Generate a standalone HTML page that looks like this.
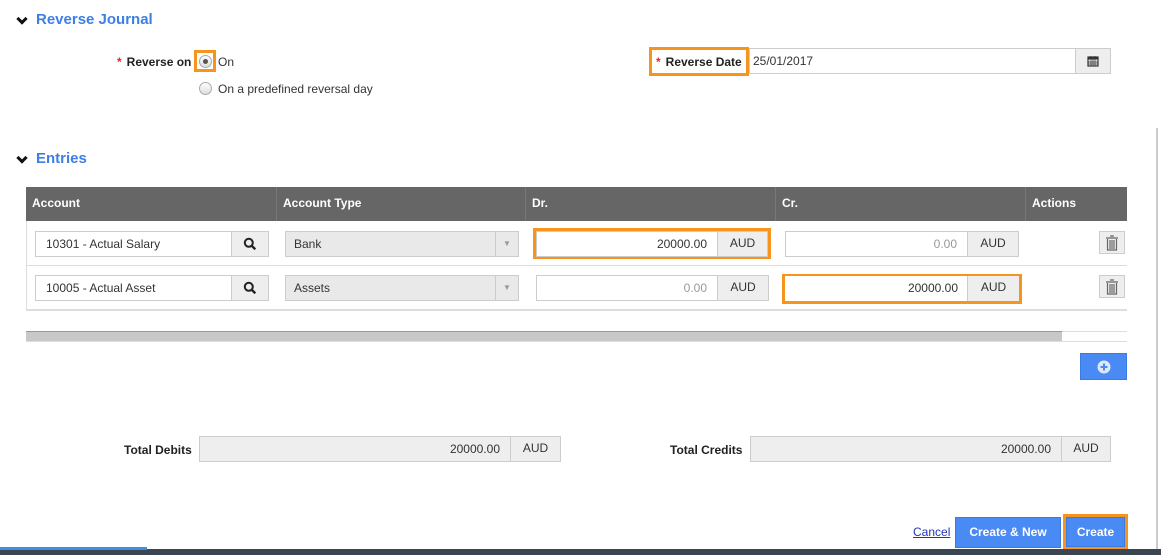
<!DOCTYPE html>
<html><head><style>
*{box-sizing:border-box;margin:0;padding:0}
body{width:1161px;height:555px;overflow:hidden;background:#fff;font-family:"Liberation Sans",Arial,sans-serif;font-size:12px;color:#333;position:relative}
.a{position:absolute}
.h{color:#3d7fe6;font-weight:bold;font-size:15px}
.chev{width:8px;height:8px;border-right:3px solid #111;border-bottom:3px solid #111;transform:rotate(45deg)}
.lbl{font-weight:bold;font-size:12px;color:#222}
.req{color:#e22;margin-right:5px}
.radio{width:13px;height:13px;border-radius:50%;border:1px solid #aaa;background:linear-gradient(#fff,#ddd)}
.inp{border:1px solid #ccc;background:#fff;height:26px;line-height:24px;padding:0 10px;font-size:12px}
.addon{border:1px solid #ccc;background:#eee;height:26px;line-height:22px;text-align:center;font-size:12px}
.sel{border:1px solid #ccc;background:#e9e9e9;height:26px;line-height:24px;padding:0 8px}
.or{border:3px solid #f7941d}
.th{background:#666;color:#fff;font-weight:bold;height:34px;line-height:33px;padding-left:6px;border-right:1px solid #777}
.btn{background:#4a8af4;color:#fff;font-weight:bold;text-align:center;border:1px solid #3b7ae0}
</style></head><body>

<div class="a chev" style="left:18px;top:15px"></div>
<div class="a h" style="left:36px;top:11px">Reverse Journal</div>
<div class="a lbl" style="left:117px;top:55px"><span class="req">*</span>Reverse on</div>
<div class="a or" style="left:194px;top:50px;width:22px;height:22px"></div>
<div class="a radio" style="left:199px;top:55px"><div style="width:5px;height:5px;border-radius:50%;background:#555;margin:3px"></div></div>
<div class="a" style="left:218px;top:55px">On</div>
<div class="a radio" style="left:199px;top:82px"></div>
<div class="a" style="left:218px;top:82px">On a predefined reversal day</div>

<div class="a or" style="left:649px;top:47px;width:100px;height:29px;background:#fff"></div>
<div class="a lbl" style="left:656px;top:55px"><span class="req">*</span>Reverse Date</div>
<div class="a inp" style="left:749px;top:48px;width:327px;padding-left:3px">25/01/2017</div>
<div class="a addon" style="left:1075px;top:48px;width:36px">
<svg width="12" height="12" viewBox="0 0 12 12" style="margin-top:6px"><rect x="1" y="2" width="10" height="9" fill="none" stroke="#333" stroke-width="1.2"/><rect x="1" y="2" width="10" height="2.5" fill="#333"/><path d="M4 1v2M8 1v2M1 7h10M1 9h10M4 4v7M6 4v7M8 4v7" stroke="#333" stroke-width=".7"/></svg></div>

<div class="a" style="left:1156px;top:128px;width:2px;height:422px;background:#ccc"></div>

<div class="a chev" style="left:18px;top:154px"></div>
<div class="a h" style="left:36px;top:150px">Entries</div>

<div class="a th" style="left:26px;top:187px;width:251px">Account</div>
<div class="a th" style="left:277px;top:187px;width:249px">Account Type</div>
<div class="a th" style="left:526px;top:187px;width:250px">Dr.</div>
<div class="a th" style="left:776px;top:187px;width:250px">Cr.</div>
<div class="a th" style="left:1026px;top:187px;width:101px;border:0">Actions</div>
<div class="a" style="left:26px;top:221px;width:1px;height:89px;background:#ddd"></div>
<div class="a" style="left:26px;top:265px;width:1101px;height:1px;background:#ddd"></div>
<div class="a" style="left:26px;top:309px;width:1101px;height:2px;background:#ddd"></div>

<!-- row1 -->
<div class="a inp" style="left:35px;top:231px;width:197px">10301 - Actual Salary</div>
<div class="a addon" style="left:231px;top:231px;width:38px"><svg width="14" height="14" viewBox="0 0 14 14" style="margin-top:5px"><circle cx="5.8" cy="5.8" r="4" fill="none" stroke="#222" stroke-width="2"/><path d="M8.8 8.8l3.5 3.5" stroke="#222" stroke-width="2.4"/></svg></div>
<div class="a sel" style="left:285px;top:231px;width:234px">Bank<span style="position:absolute;right:0;top:0;width:23px;height:24px;border-left:1px solid #ccc;text-align:center;color:#999;font-size:8px">▼</span></div>
<div class="a or" style="left:533px;top:228px;width:238px;height:31px"></div>
<div class="a inp" style="left:536px;top:231px;width:182px;text-align:right">20000.00</div>
<div class="a addon" style="left:717px;top:231px;width:51px">AUD</div>
<div class="a inp" style="left:785px;top:231px;width:183px;text-align:right;color:#999">0.00</div>
<div class="a addon" style="left:967px;top:231px;width:52px">AUD</div>
<div class="a addon" style="left:1099px;top:231px;width:26px;height:23px"><svg width="12" height="16" viewBox="0 0 12 16" style="margin-top:3px"><path d="M0 3h12M4 1h4M1.5 4v11h9V4M4 5v9M6 5v9M8 5v9" stroke="#666" fill="none" stroke-width="1.2"/></svg></div>

<!-- row2 -->
<div class="a inp" style="left:35px;top:275px;width:197px">10005 - Actual Asset</div>
<div class="a addon" style="left:231px;top:275px;width:38px"><svg width="14" height="14" viewBox="0 0 14 14" style="margin-top:5px"><circle cx="5.8" cy="5.8" r="4" fill="none" stroke="#222" stroke-width="2"/><path d="M8.8 8.8l3.5 3.5" stroke="#222" stroke-width="2.4"/></svg></div>
<div class="a sel" style="left:285px;top:275px;width:234px">Assets<span style="position:absolute;right:0;top:0;width:23px;height:24px;border-left:1px solid #ccc;text-align:center;color:#999;font-size:8px">▼</span></div>
<div class="a inp" style="left:536px;top:275px;width:182px;text-align:right;color:#999">0.00</div>
<div class="a addon" style="left:717px;top:275px;width:52px">AUD</div>
<div class="a or" style="left:782px;top:274px;width:240px;height:30px"></div>
<div class="a inp" style="left:785px;top:276px;width:183px;height:25px;text-align:right;border:0">20000.00</div>
<div class="a addon" style="left:967px;top:276px;width:52px;height:25px;border:0;border-left:1px solid #ccc">AUD</div>
<div class="a addon" style="left:1099px;top:275px;width:26px;height:23px"><svg width="12" height="16" viewBox="0 0 12 16" style="margin-top:3px"><path d="M0 3h12M4 1h4M1.5 4v11h9V4M4 5v9M6 5v9M8 5v9" stroke="#666" fill="none" stroke-width="1.2"/></svg></div>

<!-- scrollbar -->
<div class="a" style="left:26px;top:331px;width:1101px;height:11px;border-top:1px solid #ddd;border-bottom:1px solid #ddd"></div>
<div class="a" style="left:26px;top:331px;width:1036px;height:10px;background:#c8c8c8;border-top:1px solid #999"></div>

<div class="a btn" style="left:1080px;top:353px;width:47px;height:27px"><svg width="14" height="14" viewBox="0 0 14 14" style="margin-top:6px"><circle cx="7" cy="7" r="6.5" fill="#dfe8f8"/><path d="M7 3.5v7M3.5 7h7" stroke="#4a8af4" stroke-width="2"/></svg></div>

<div class="a lbl" style="left:124px;top:443px">Total Debits</div>
<div class="a inp" style="left:199px;top:436px;width:312px;background:#eee;text-align:right">20000.00</div>
<div class="a addon" style="left:510px;top:436px;width:51px">AUD</div>
<div class="a lbl" style="left:670px;top:443px">Total Credits</div>
<div class="a inp" style="left:750px;top:436px;width:312px;background:#eee;text-align:right">20000.00</div>
<div class="a addon" style="left:1061px;top:436px;width:50px">AUD</div>

<div class="a" style="left:913px;top:525px;color:#2233bb;text-decoration:underline">Cancel</div>
<div class="a btn" style="left:955px;top:517px;width:106px;height:31px;line-height:29px">Create &amp; New</div>
<div class="a or" style="left:1063px;top:514px;width:65px;height:36px"></div>
<div class="a btn" style="left:1066px;top:517px;width:59px;height:30px;line-height:28px">Create</div>

<div class="a" style="left:0;top:549px;width:1161px;height:6px;background:#3b4552"></div>
<div class="a" style="left:0;top:547px;width:147px;height:3px;background:#3d8fe0"></div>
</body></html>
